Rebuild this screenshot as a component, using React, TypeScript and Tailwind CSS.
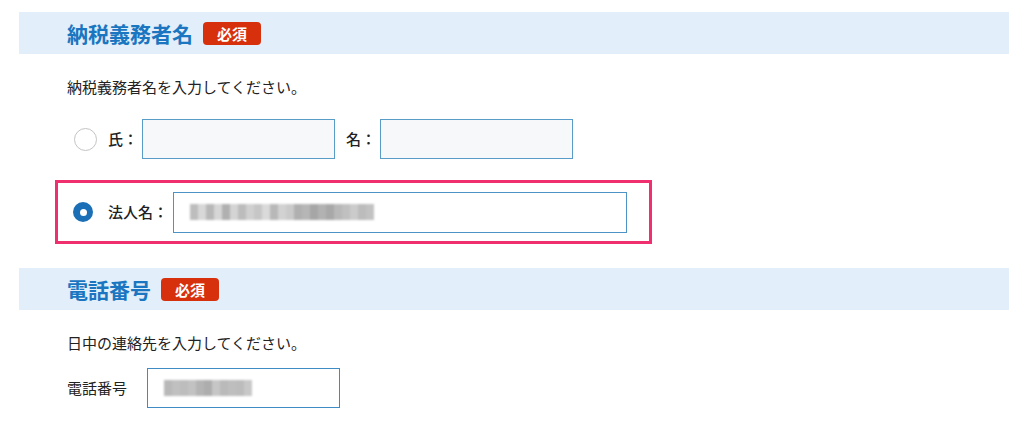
import React from 'react'

const font = { fontFamily: '"Noto Sans CJK JP", "Noto Sans", sans-serif' }

function Required() {
  return (
    <span className="inline-flex h-[23px] w-[58px] items-center justify-center rounded-[4px] bg-[#d7300c] text-[15px] font-bold leading-none text-white">
      必須
    </span>
  )
}

function SectionHeader({ title }: { title: string }) {
  return (
    <div className="flex h-[42px] items-center gap-[10px] bg-[#e2eef9] pl-[48px]">
      <h2 className="text-[21px] font-bold leading-none text-[#1a76c0]">{title}</h2>
      <Required />
    </div>
  )
}

function Radio({ checked }: { checked?: boolean }) {
  if (checked) {
    return (
      <span className="flex h-[20px] w-[20px] items-center justify-center rounded-full bg-[#1b6fb6]">
        <span className="h-[7px] w-[7px] rounded-full bg-white" />
      </span>
    )
  }
  return <span className="h-[23px] w-[23px] rounded-full border border-[#c4c4c4] bg-white" />
}

// pixelated placeholder for masked input values
function Mosaic({ cells }: { cells: string[] }) {
  return (
    <div className="flex h-[16px] blur-[0.8px]">
      {cells.map((c, i) => (
        <span key={i} className="h-full w-[8px]" style={{ background: c }} />
      ))}
    </div>
  )
}

const corpCells = [
  '#bdbdbd', '#d8d8d8', '#b8b8b8', '#d6d6d6', '#b0b0b0', '#d4d4d4', '#bcbcbc', '#d0d0d0',
  '#c6c6c6', '#dadada', '#b8b8b8', '#d2d2d2', '#cacaca', '#b0b0b0', '#b6b6b6', '#a6a6a6',
  '#b2b2b2', '#a8a8a8', '#b8b8b8', '#c0c0c0', '#cbcbcb', '#bcbcbc', '#c2c2c2',
]
const telCells = [
  '#b8b8b8', '#c0c0c0', '#bdbdbd', '#c2c2c2', '#b4b4b4', '#adadad', '#c6c6c6', '#bababa',
  '#bebebe', '#bcbcbc', '#c8c8c8',
]

export default function App() {
  return (
    <div className="min-h-[430px] bg-white text-[#222]" style={font}>
      <div className="ml-[19px] w-[990px] pt-[12px]">
        <SectionHeader title="納税義務者名" />
        <div className="pl-[48px]">
          <p className="mt-[23px] text-[15px] leading-[20px]">納税義務者名を入力してください。</p>

          <div className="mt-[22px] flex h-[40px] items-center pl-[7px]">
            <Radio />
            <span className="ml-[11px] w-[34px] text-[15px] font-medium">氏：</span>
            <input className="h-[40px] w-[193px] border border-[#5a9cc8] bg-[#f6f8fa] outline-none" />
            <span className="ml-[11px] w-[34px] text-[15px] font-medium">名：</span>
            <input className="h-[40px] w-[193px] border border-[#5a9cc8] bg-[#f6f8fa] outline-none" />
          </div>

          <div className="-ml-[12px] mt-[21px] flex h-[64px] w-[597px] items-center border-[3px] border-[#f0306e] pl-[15px]">
            <Radio checked />
            <span className="ml-[15px] w-[65px] text-[15px] font-medium">法人名：</span>
            <div className="flex h-[41px] w-[454px] items-center border border-[#4e93c4] bg-white pl-[16px]">
              <Mosaic cells={corpCells} />
            </div>
          </div>
        </div>

        <div className="mt-[24px]">
          <SectionHeader title="電話番号" />
        </div>
        <div className="pl-[48px]">
          <p className="mt-[23px] text-[15px] leading-[20px]">日中の連絡先を入力してください。</p>
          <div className="mt-[15px] flex h-[40px] items-center">
            <span className="w-[80px] text-[15px]">電話番号</span>
            <div className="flex h-[40px] w-[193px] items-center border border-[#3f8bc4] bg-white pl-[16px]">
              <Mosaic cells={telCells} />
            </div>
          </div>
        </div>
      </div>
    </div>
  )
}
